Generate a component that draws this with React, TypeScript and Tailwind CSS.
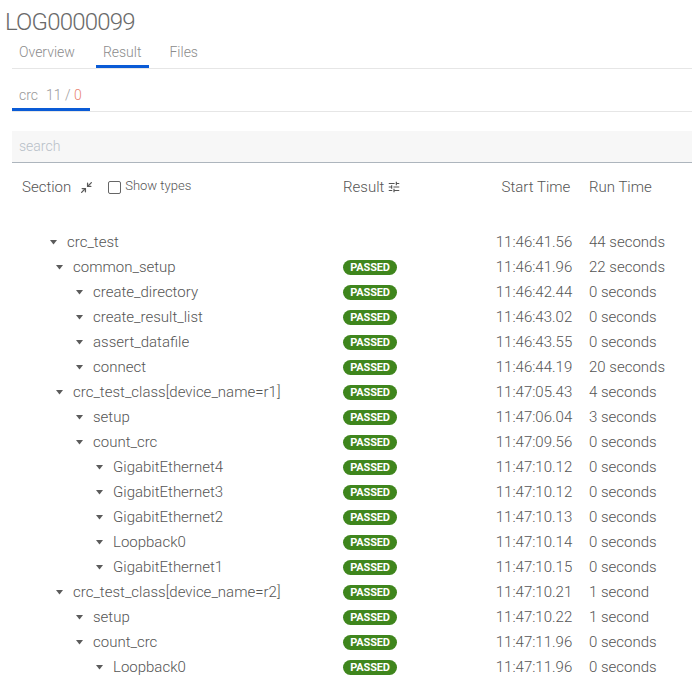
import React from "react";
import { MdTune } from "react-icons/md";

type Row = { level: number; name: string; passed: boolean; start: string; run: string };

const rows: Row[] = [
  { level: 0, name: "crc_test", passed: false, start: "11:46:41.56", run: "44 seconds" },
  { level: 1, name: "common_setup", passed: true, start: "11:46:41.96", run: "22 seconds" },
  { level: 2, name: "create_directory", passed: true, start: "11:46:42.44", run: "0 seconds" },
  { level: 2, name: "create_result_list", passed: true, start: "11:46:43.02", run: "0 seconds" },
  { level: 2, name: "assert_datafile", passed: true, start: "11:46:43.55", run: "0 seconds" },
  { level: 2, name: "connect", passed: true, start: "11:46:44.19", run: "20 seconds" },
  { level: 1, name: "crc_test_class[device_name=r1]", passed: true, start: "11:47:05.43", run: "4 seconds" },
  { level: 2, name: "setup", passed: true, start: "11:47:06.04", run: "3 seconds" },
  { level: 2, name: "count_crc", passed: true, start: "11:47:09.56", run: "0 seconds" },
  { level: 3, name: "GigabitEthernet4", passed: true, start: "11:47:10.12", run: "0 seconds" },
  { level: 3, name: "GigabitEthernet3", passed: true, start: "11:47:10.12", run: "0 seconds" },
  { level: 3, name: "GigabitEthernet2", passed: true, start: "11:47:10.13", run: "0 seconds" },
  { level: 3, name: "Loopback0", passed: true, start: "11:47:10.14", run: "0 seconds" },
  { level: 3, name: "GigabitEthernet1", passed: true, start: "11:47:10.15", run: "0 seconds" },
  { level: 1, name: "crc_test_class[device_name=r2]", passed: true, start: "11:47:10.21", run: "1 second" },
  { level: 2, name: "setup", passed: true, start: "11:47:10.22", run: "1 second" },
  { level: 2, name: "count_crc", passed: true, start: "11:47:11.96", run: "0 seconds" },
  { level: 3, name: "Loopback0", passed: true, start: "11:47:11.96", run: "0 seconds" },
];

const indent = ["pl-[38px]", "pl-[44px]", "pl-[64px]", "pl-[84px]"];

function Caret() {
  return (
    <svg width="7" height="5" viewBox="0 0 7 5" className="shrink-0">
      <polygon points="0,0 7,0 3.5,4.5" fill="#5b5b5b" />
    </svg>
  );
}

function CompressIcon() {
  return (
    <svg width="13" height="13" viewBox="0 0 24 24" fill="none" stroke="#5a5a5a" strokeWidth="2.4" strokeLinecap="round" strokeLinejoin="round">
      <polyline points="4 14 10 14 10 20" />
      <polyline points="20 10 14 10 14 4" />
      <line x1="14" y1="10" x2="21" y2="3" />
      <line x1="3" y1="21" x2="10" y2="14" />
    </svg>
  );
}

export default function App() {
  return (
    <div className="min-h-screen bg-white text-[#555] font-light font-['Roboto','Liberation_Sans',sans-serif]">
      <div className="pl-[5px] pt-[8px] text-[24px] leading-[28px] tracking-[-0.8px] text-[#6a6a6a]">LOG0000099</div>

      <div className="ml-[12px] flex gap-[13px] border-b border-[#e6e6e6] text-[14px] text-[#8c8c8c]">
        <div className="pl-[7px] pr-[8px] pt-[6px] pb-[3px] leading-[20px] border-b-[3px] border-transparent">Overview</div>
        <div className="pl-[7px] pr-[8px] pt-[6px] pb-[3px] leading-[20px] border-b-[3px] border-[#0a5bd6]">Result</div>
        <div className="pl-[7px] pr-[8px] pt-[6px] pb-[3px] leading-[20px] border-b-[3px] border-transparent">Files</div>
      </div>

      <div className="ml-[12px] mt-[12px] flex border-b border-[#e6e6e6] text-[14px] text-[#999]">
        <div className="pl-[7px] pr-[8px] pt-[5px] pb-[4px] leading-[18px] border-b-[3px] border-[#0a5bd6] flex gap-[8px]">
          <span>crc</span>
          <span>
            11 / <span className="text-[#e98371]">0</span>
          </span>
        </div>
      </div>

      <div className="ml-[12px] mt-[19px] h-[32px] bg-[#f7f7f7] border-b border-[#adb5bd] flex items-center pl-[7px] text-[14px] text-[#b8c0c8]">
        search
      </div>

      <div className="ml-[12px] h-[48px] flex items-center text-[15px] text-[#555]">
        <div className="w-[331px] flex items-center pl-[10px]">
          <span>Section</span>
          <span className="ml-[9px] flex items-center"><CompressIcon /></span>
          <span className="ml-[15px] w-[13px] h-[13px] rounded-[2px] border border-[#666] bg-white"></span>
          <span className="ml-[4px] text-[13px] -mt-[2px]">Show types</span>
        </div>
        <div className="w-[137px] flex items-center">
          <span>Result</span>
          <MdTune className="ml-[3px] text-[#555]" size={14} />
        </div>
        <div className="w-[112px] text-center">Start Time</div>
        <div className="-ml-[3px]">Run Time</div>
      </div>

      <div className="ml-[12px] pt-[19px] text-[15px] text-[#555]">
        {rows.map((r, i) => (
          <div key={i} className="h-[25px] flex items-center">
            <div className={`w-[331px] flex items-center gap-[10px] ${indent[r.level]}`}>
              <Caret />
              <span>{r.name}</span>
            </div>
            <div className="w-[137px] flex items-center">
              {r.passed && (
                <span className="w-[54px] h-[15px] rounded-full bg-[#3f861d] text-white text-[11px] font-bold leading-[15px] text-center tracking-[-0.2px]">
                  PASSED
                </span>
              )}
            </div>
            <div className="w-[108px] text-center">{r.start}</div>
            <div className="pl-[1px]">{r.run}</div>
          </div>
        ))}
      </div>
    </div>
  );
}
